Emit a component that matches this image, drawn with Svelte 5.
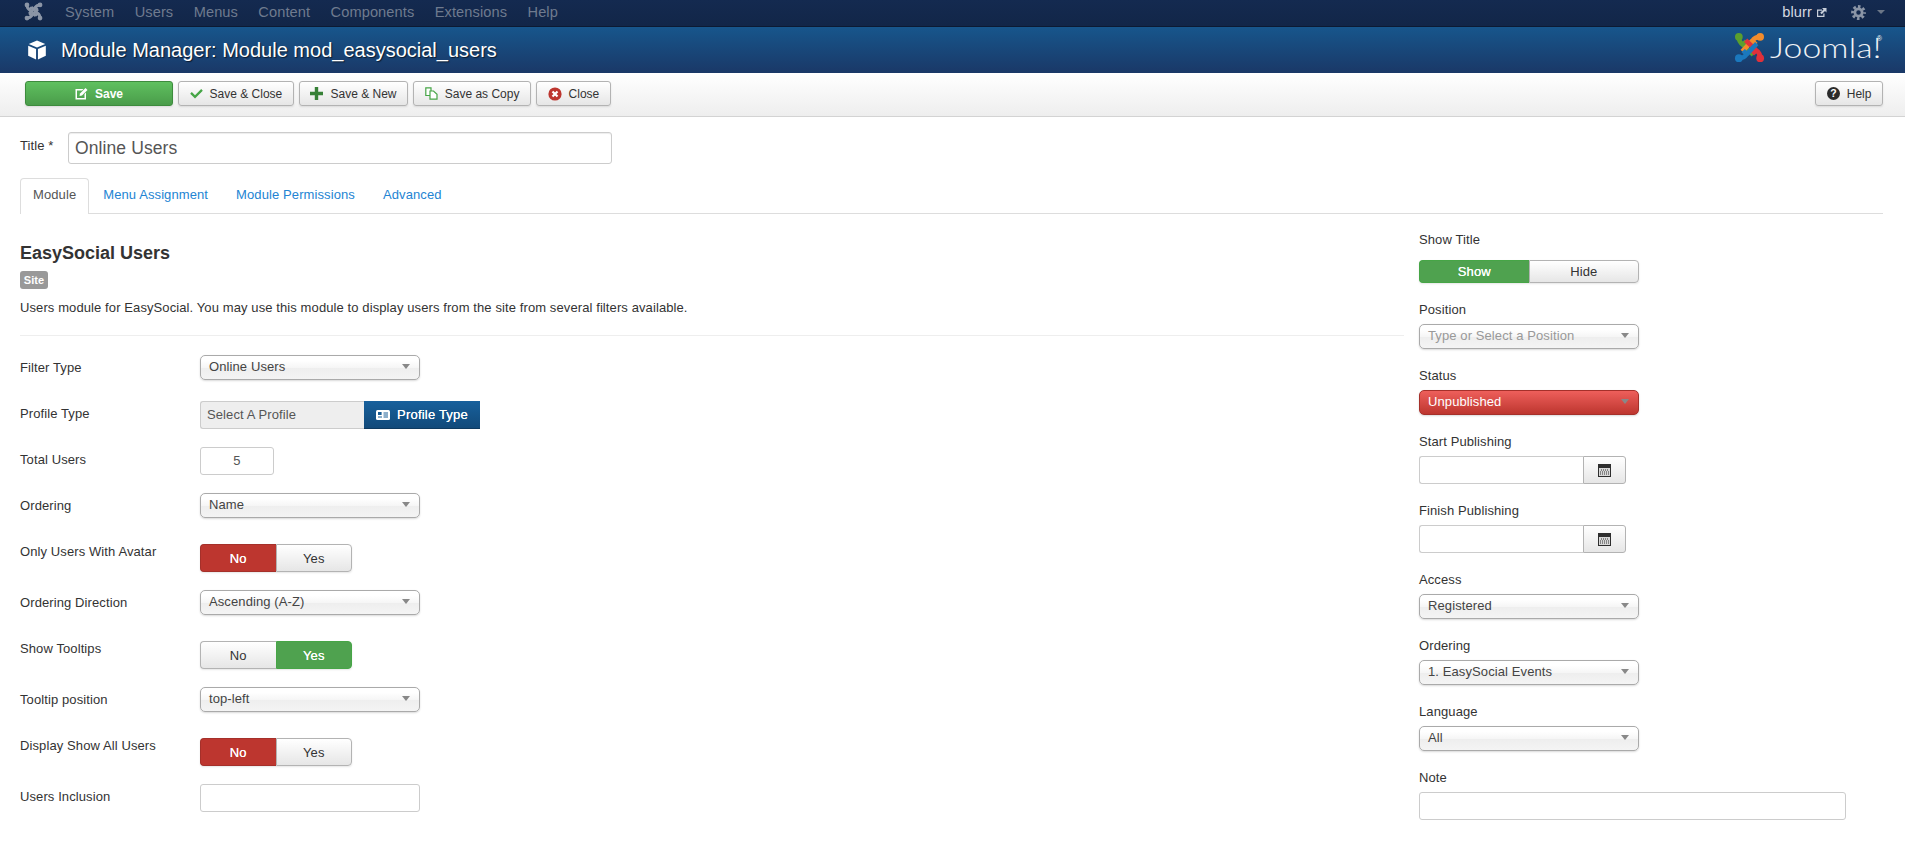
<script>
  const menu = ["System", "Users", "Menus", "Content", "Components", "Extensions", "Help"];
  const tabs = ["Module", "Menu Assignment", "Module Permissions", "Advanced"];
  const joomlaArms = [
    { color: "#5a9f2e", rot: 0 },
    { color: "#f28c2c", rot: 90 },
    { color: "#e0313a", rot: 180 },
    { color: "#1b78bd", rot: 270 },
  ];
</script>

{#snippet joomla(colors)}
  <svg class="jmark" viewBox="0 0 32 32">
    {#each joomlaArms as arm, i}
      <g transform="rotate({arm.rot} 16 16)" fill="none" stroke={colors ? colors[i] : arm.color}>
        <path d="M5 5 C5 9 6 11 9 13 L13 9.5 M9 13 L20 23.5" stroke-width="4.8" stroke-linecap="butt" />
        <circle cx="5" cy="5" r="4" fill={colors ? colors[i] : arm.color} stroke="none" />
      </g>
    {/each}
  </svg>
{/snippet}

{#snippet select(text, cls = "")}
  <div class="chosen {cls}"><span>{text}</span><i class="caret"></i></div>
{/snippet}

{#snippet toggle(a, b, active, tone, cls = "")}
  <div class="toggle {cls}">
    <div class="opt" class:red={active === a && tone === "red"} class:green={active === a && tone === "green"}>{a}</div>
    <div class="opt" class:red={active === b && tone === "red"} class:green={active === b && tone === "green"}>{b}</div>
  </div>
{/snippet}

{#snippet calendar()}
  <div class="datefield">
    <div class="dateinput"></div>
    <div class="datebtn">
      <svg width="13" height="13" viewBox="0 0 13 13">
        <rect x="0" y="0" width="13" height="13" fill="#2e2e2e" />
        <rect x="1" y="4" width="11" height="8" fill="#d8d8d8" />
        <path d="M3 6h8M2 8h9M2 10h9" stroke="#333" stroke-width="1" stroke-dasharray="1 1" />
      </svg>
    </div>
  </div>
{/snippet}

<div class="navbar">
  <div class="navleft">
    <span class="navmark">{@render joomla(["#8b95a6", "#8b95a6", "#8b95a6", "#8b95a6"])}</span>
    {#each menu as m}<span class="navitem">{m}</span>{/each}
  </div>
  <div class="navright">
    <span class="user">blurr</span>
    <svg class="ext" width="11" height="11" viewBox="0 0 11 11">
      <path d="M1 2.5h5v1.2H2.2v5.1h5.1V6.5h1.2V10H1z" fill="#c9d0db" />
      <path d="M6 1h4.5v4.5L9 4 5.7 7.3 4.2 5.8 7.5 2.5z" fill="#c9d0db" />
    </svg>
    <svg class="gear" width="15" height="15" viewBox="0 0 14 14" fill="none" stroke="#8b95a6">
      <circle cx="7" cy="7" r="3.4" stroke-width="2.6" />
      <circle cx="7" cy="7" r="5.6" stroke-width="2.6" stroke-dasharray="2.4 2" stroke-dashoffset="1.2" />
    </svg>
    <i class="navcaret"></i>
  </div>
</div>

<header class="titlebar">
  <div class="pagetitle">
    <svg class="cube" width="20" height="20" viewBox="0 0 17 17">
      <path d="M8.5 0.5 15.5 3.4 8.5 6.4 1.5 3.4z" fill="#fff" />
      <path d="M1 4.8 7.7 7.7V16.5L1 13.4z" fill="#fff" />
      <path d="M16 4.8 9.3 7.7V16.5L16 13.4z" fill="#fff" />
    </svg>
    <h1>Module Manager: Module mod_easysocial_users</h1>
  </div>
  <div class="brand">
    {@render joomla(null)}
    <span class="wordmark">Joomla!</span><sup>®</sup>
  </div>
</header>

<div class="toolbar">
  <button class="btn save">
    <svg width="13" height="13" viewBox="0 0 13 13">
      <path d="M0.5 2h8L7 3.5H2V11h7.5V7L11 5.5V12.5H0.5z" fill="#fff" />
      <path d="M5 6.5 10.5 1 12.5 3 7 8.5 4.5 9z" fill="#fff" />
    </svg>
    Save
  </button>
  <button class="btn">
    <svg width="13" height="11" viewBox="0 0 13 11"><path d="M1.8 4 5 7.2 11.2 1l1.6 1.8L5 10.6.2 5.8z" fill="#46a546" /></svg>
    Save &amp; Close
  </button>
  <button class="btn">
    <svg width="13" height="13" viewBox="0 0 13 13"><path d="M4.8 0h3.4v4.8H13v3.4H8.2V13H4.8V8.2H0V4.8h4.8z" fill="#378137" /></svg>
    Save &amp; New
  </button>
  <button class="btn">
    <svg width="13" height="13" viewBox="0 0 13 13" fill="#fff" stroke="#46a546" stroke-width="1.2">
      <path d="M0.8 0.8H6V8.5H0.8z" />
      <path d="M5 4H8.5L12 7.2V12.2H5z" />
    </svg>
    Save as Copy
  </button>
  <button class="btn">
    <svg width="14" height="14" viewBox="0 0 14 14">
      <circle cx="7" cy="7" r="6.6" fill="#bd362f" />
      <path d="M4.5 4.5l5 5M9.5 4.5l-5 5" stroke="#fff" stroke-width="2.2" />
    </svg>
    Close
  </button>
  <button class="btn help">
    <svg width="13" height="13" viewBox="0 0 13 13">
      <circle cx="6.5" cy="6.5" r="6.5" fill="#2b2b2b" />
      <text x="6.5" y="10.4" text-anchor="middle" fill="#fff" font-size="10.5" font-weight="700" font-family="Liberation Sans, sans-serif">?</text>
    </svg>
    Help
  </button>
</div>

<main class="content">
  <div class="titlerow">
    <label for="title">Title *</label>
    <div class="titleinput" id="title">Online Users</div>
  </div>

  <nav class="tabs">
    {#each tabs as t, i}
      <span class="tab" class:active={i === 0}>{t}</span>
    {/each}
  </nav>

  <div class="columns">
    <section class="left">
      <h3>EasySocial Users</h3>
      <span class="badge">Site</span>
      <p>Users module for EasySocial. You may use this module to display users from the site from several filters available.</p>
      <hr />

      <div class="row short"><div class="lbl">Filter Type</div>{@render select("Online Users", "w220")}</div>
      <div class="row">
        <div class="lbl">Profile Type</div>
        <div class="profile">
          <div class="profilename">Select A Profile</div>
          <div class="profilebtn">
            <svg width="14" height="10" viewBox="0 0 14 10">
              <rect width="14" height="10" rx="1.5" fill="#fff" />
              <rect x="2" y="2" width="3.6" height="3" fill="#1a5e96" />
              <path d="M2 7h4M7.5 3h4.5M7.5 5h4.5M7.5 7h4.5" stroke="#1a5e96" stroke-width="1" />
            </svg>
            Profile Type
          </div>
        </div>
      </div>
      <div class="row"><div class="lbl">Total Users</div><div class="numinput">5</div></div>
      <div class="row long"><div class="lbl">Ordering</div>{@render select("Name", "w220")}</div>
      <div class="row"><div class="lbl up">Only Users With Avatar</div>{@render toggle("No", "Yes", "No", "red")}</div>
      <div class="row long"><div class="lbl">Ordering Direction</div>{@render select("Ascending (A-Z)", "w220")}</div>
      <div class="row"><div class="lbl up">Show Tooltips</div>{@render toggle("No", "Yes", "Yes", "green")}</div>
      <div class="row long"><div class="lbl">Tooltip position</div>{@render select("top-left", "w220")}</div>
      <div class="row"><div class="lbl up">Display Show All Users</div>{@render toggle("No", "Yes", "No", "red")}</div>
      <div class="row"><div class="lbl">Users Inclusion</div><div class="textinput"></div></div>
    </section>

    <aside class="right">
      <div class="field"><div class="flbl first">Show Title</div>{@render toggle("Show", "Hide", "Show", "green", "wide")}</div>
      <div class="field"><div class="flbl">Position</div>{@render select("Type or Select a Position", "w220 muted")}</div>
      <div class="field"><div class="flbl">Status</div>{@render select("Unpublished", "w220 danger")}</div>
      <div class="field"><div class="flbl">Start Publishing</div>{@render calendar()}</div>
      <div class="field"><div class="flbl">Finish Publishing</div>{@render calendar()}</div>
      <div class="field"><div class="flbl">Access</div>{@render select("Registered", "w220")}</div>
      <div class="field"><div class="flbl">Ordering</div>{@render select("1. EasySocial Events", "w220")}</div>
      <div class="field"><div class="flbl">Language</div>{@render select("All", "w220")}</div>
      <div class="field"><div class="flbl">Note</div><div class="noteinput"></div></div>
    </aside>
  </div>
</main>

<style>
  :global(body) {
    margin: 0;
    background: #fff;
    font-family: "Liberation Sans", Arial, sans-serif;
    font-size: 13px;
    letter-spacing: 0.1px;
    color: #333;
  }
  .navbar {
    height: 27px;
    box-sizing: border-box;
    display: flex;
    justify-content: space-between;
    background: linear-gradient(#142a50, #122648);
    border-bottom: 1px solid #0c1a33;
    color: #6f7b8f;
    font-size: 14.6px;
  }
  .navleft {
    display: flex;
    align-items: center;
    padding-left: 24px;
    height: 24px;
  }
  .navmark { width: 41px; height: 20px; display: block; }
  .navmark :global(.jmark) { width: 19px; height: 19px; display: block; }
  .navitem { margin-right: 20.4px; }
  .navright {
    display: flex;
    align-items: center;
    height: 24px;
    padding-right: 20px;
  }
  .user { color: #d5dae2; margin-right: 4px; }
  .ext { margin-right: 24px; }
  .gear { margin-right: 11px; }
  .navcaret {
    border: 4px solid transparent;
    border-top-color: #6b7687;
    border-bottom: 0;
  }
  .titlebar {
    height: 46px;
    display: flex;
    justify-content: space-between;
    background: linear-gradient(#17568c, #1a3867);
    color: #fff;
  }
  .pagetitle {
    display: flex;
    align-items: center;
    padding-left: 27px;
    gap: 14px;
  }
  .pagetitle h1 {
    margin: 0;
    font-size: 20px;
    font-weight: 400;
    letter-spacing: 0;
    text-shadow: 1px 1px 1px rgba(0, 0, 0, 0.6);
  }
  .brand {
    display: flex;
    align-items: flex-start;
    padding: 5px 23px 0 0;
  }
  .brand :global(.jmark) { width: 31px; height: 31px; display: block; }
  .wordmark {
    width: 107px;
    font-family: Lato, sans-serif;
    font-weight: 300;
    font-size: 27px;
    line-height: 32px;
    margin-left: 5px;
    color: #f0f3f7;
    transform: scaleX(1.25);
    transform-origin: left center;
  }
  .brand sup { font-size: 7px; line-height: 8px; margin-top: 3px; vertical-align: top; }
  .toolbar {
    height: 44px;
    box-sizing: border-box;
    display: flex;
    gap: 5px;
    padding: 8px 22px 0 25px;
    background: linear-gradient(#fff, #eee);
    border-bottom: 1px solid #d3d3d3;
  }
  .btn {
    height: 25px;
    box-sizing: border-box;
    padding: 0 10.6px;
    display: flex;
    align-items: center;
    gap: 7px;
    font: 12px "Liberation Sans", Arial, sans-serif;
    color: #333;
    background: linear-gradient(#fff, #e6e6e6);
    border: 1px solid #b3b3b3;
    border-radius: 3px;
    box-shadow: 0 1px 2px rgba(0, 0, 0, 0.1);
  }
  .btn.save {
    width: 148px;
    justify-content: center;
    color: #fff;
    font-weight: 700;
    background: linear-gradient(#5fc05f, #4a9c4a);
    border-color: #3d8b3d;
  }
  .btn.help { margin-left: auto; }
  .content { padding: 15px 22px 0 20px; }
  .titlerow { display: flex; align-items: flex-start; }
  .titlerow label { width: 48px; padding-top: 6px; }
  .titleinput {
    width: 544px;
    height: 32px;
    box-sizing: border-box;
    border: 1px solid #ccc;
    border-radius: 3px;
    padding: 0 6px;
    font-size: 17.5px;
    line-height: 30px;
    color: #555;
    box-shadow: inset 0 1px 1px rgba(0, 0, 0, 0.075);
  }
  .tabs {
    display: flex;
    margin-top: 14px;
    height: 36px;
    box-sizing: border-box;
    border-bottom: 1px solid #ddd;
  }
  .tab {
    height: 36px;
    box-sizing: border-box;
    padding: 0 13px;
    line-height: 32px;
    color: #2384d3;
    border: 1px solid transparent;
    border-bottom: 0;
  }
  .tab.active {
    padding: 0 12px;
    color: #555;
    background: #fff;
    border-color: #ddd;
    border-radius: 4px 4px 0 0;
  }
  .columns {
    display: grid;
    grid-template-columns: 1384px 1fr;
    gap: 15px;
  }
  .left h3 {
    margin: 29px 0 0;
    font-size: 18px;
    line-height: 20px;
    font-weight: 700;
    letter-spacing: 0;
  }
  .badge {
    display: inline-block;
    margin-top: 8px;
    width: 28px;
    height: 18px;
    line-height: 18px;
    text-align: center;
    border-radius: 3px;
    background: #999;
    color: #fff;
    font-size: 11px;
    font-weight: 700;
    vertical-align: top;
  }
  .left p {
    margin: 10px 0 0;
    line-height: 18px;
  }
  .left hr {
    margin: 18px 0 19px;
    border: 0;
    border-top: 1px solid #eee;
  }
  .row {
    display: flex;
    align-items: flex-start;
    min-height: 28px;
    margin-bottom: 18px;
  }
  .row.long { margin-bottom: 22px; min-height: 29px; }
  .lbl { width: 180px; padding-top: 5px; line-height: 16px; }
  .lbl.up { padding-top: 0; }
  .chosen {
    height: 25px;
    box-sizing: border-box;
    display: flex;
    align-items: center;
    justify-content: space-between;
    padding: 0 9px 2px 8px;
    border: 1px solid #aaa;
    border-radius: 5px;
    background: linear-gradient(#fff 20%, #f6f6f6 50%, #eee 52%, #f4f4f4);
    box-shadow: 0 1px 2px rgba(0, 0, 0, 0.15);
    color: #444;
  }
  .w220 { width: 220px; }
  .chosen.muted { color: #999; }
  .chosen.danger {
    color: #fff;
    border-color: #a5302a;
    background: linear-gradient(#ee5f5b, #bd362f);
  }
  .caret {
    border: 4px solid transparent;
    border-top: 5px solid #888;
    border-bottom: 0;
  }
  .profile { display: flex; height: 28px; }
  .profilename {
    width: 164px;
    box-sizing: border-box;
    padding-left: 6px;
    line-height: 26px;
    background: #eee;
    color: #555;
    border: 1px solid #ccc;
    border-right: 0;
    border-radius: 3px 0 0 3px;
  }
  .profilebtn {
    width: 116px;
    display: flex;
    align-items: center;
    justify-content: center;
    gap: 7px;
    color: #fff;
    letter-spacing: 0.2px;
    text-shadow: 0 0 0.5px #fff;
    background: linear-gradient(#17609c, #124a7a);
    border-bottom: 1px solid #0e3a60;
    box-sizing: border-box;
  }
  .numinput {
    width: 74px;
    height: 28px;
    box-sizing: border-box;
    text-align: center;
    line-height: 26px;
    color: #555;
    border: 1px solid #ccc;
    border-radius: 3px;
  }
  .textinput {
    width: 220px;
    height: 28px;
    box-sizing: border-box;
    border: 1px solid #ccc;
    border-radius: 3px;
  }
  .toggle {
    display: flex;
    width: 152px;
    height: 28px;
    border-radius: 4px;
    box-shadow: 0 1px 2px rgba(0, 0, 0, 0.1);
  }
  .toggle.wide { width: 220px; height: 23px; }
  .opt {
    flex: 1;
    display: flex;
    align-items: center;
    justify-content: center;
    background: linear-gradient(#fff, #e6e6e6);
    border: 1px solid #b3b3b3;
    color: #333;
  }
  .opt:first-child { border-radius: 4px 0 0 4px; border-right: 0; }
  .opt:last-child { border-radius: 0 4px 4px 0; }
  .opt.red { background: #bd362f; border-color: #a5302a; color: #fff; text-shadow: 0 0 0.5px #fff; }
  .opt.green { background: #4fa24f; border-color: #46a546; color: #fff; text-shadow: 0 0 0.5px #fff; }
  .right { padding-top: 18px; }
  .field { margin-bottom: 19px; }
  .flbl { line-height: 16px; margin-bottom: 6px; }
  .flbl.first { margin-bottom: 12px; }
  .datefield { display: flex; height: 28px; width: 207px; }
  .dateinput {
    width: 164px;
    box-sizing: border-box;
    border: 1px solid #ccc;
    border-right: 0;
    border-radius: 3px 0 0 3px;
  }
  .datebtn {
    flex: 1;
    display: flex;
    align-items: center;
    justify-content: center;
    background: linear-gradient(#fff, #e6e6e6);
    border: 1px solid #b3b3b3;
    border-radius: 0 3px 3px 0;
  }
  .noteinput {
    width: 427px;
    height: 28px;
    box-sizing: border-box;
    border: 1px solid #ccc;
    border-radius: 3px;
  }
</style>
